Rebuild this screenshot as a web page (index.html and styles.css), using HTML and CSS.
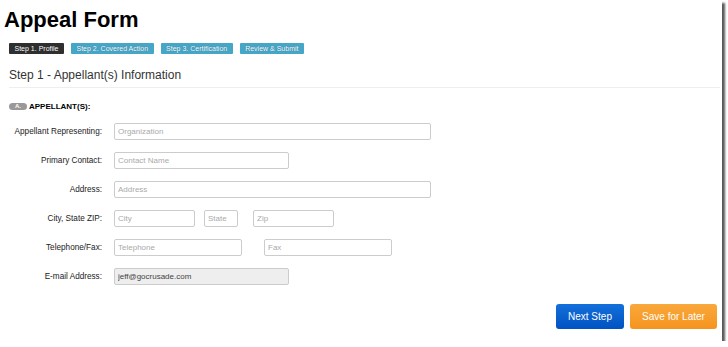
FILE: index.html
```html
<!DOCTYPE html>
<html>
<head>
  <title>Appeal Form</title>
  <link rel="stylesheet" href="styles.css">
</head>
<body>
  <div class="frame">
    <h1>Appeal Form</h1>

    <div class="steps">
      <span class="step active">Step 1. Profile</span>
      <span class="step">Step 2. Covered Action</span>
      <span class="step">Step 3. Certification</span>
      <span class="step">Review &amp; Submit</span>
    </div>

    <h2 class="section-title">Step 1 - Appellant(s) Information</h2>

    <div class="subhead">
      <span class="badge">A.</span>
      <span>APPELLANT(S):</span>
    </div>

    <form id="appealForm">
      <div class="row">
        <label for="org">Appellant Representing:</label>
        <input type="text" id="org" class="w-lg" placeholder="Organization">
      </div>

      <div class="row">
        <label for="contact">Primary Contact:</label>
        <input type="text" id="contact" class="w-md" placeholder="Contact Name">
      </div>

      <div class="row">
        <label for="address">Address:</label>
        <input type="text" id="address" class="w-lg" placeholder="Address">
      </div>

      <div class="row">
        <label for="city">City, State ZIP:</label>
        <input type="text" id="city" class="w-city" placeholder="City">
        <input type="text" id="state" class="w-state" placeholder="State">
        <input type="text" id="zip" class="w-city" placeholder="Zip">
      </div>

      <div class="row">
        <label for="phone">Telephone/Fax:</label>
        <input type="tel" id="phone" class="w-tel" placeholder="Telephone">
        <input type="tel" id="fax" class="w-tel fax" placeholder="Fax">
      </div>

      <div class="row">
        <label for="email">E-mail Address:</label>
        <input type="email" id="email" class="w-md" value="jeff@gocrusade.com" readonly>
      </div>

      <div class="buttons">
        <button type="submit" class="btn btn-next">Next Step</button>
        <button type="button" class="btn btn-save">Save for Later</button>
      </div>
    </form>
  </div>
</body>
</html>
```

FILE: styles.css
```css
body {
  font-family: "Liberation Sans", Arial, sans-serif;
  margin: 0;
  background: #fff;
  color: #333;
}

.frame {
  width: 722px;
  height: 341px;
  box-sizing: border-box;
  padding-top: 7px;
  background: #fff;
  box-shadow: 3px 3px 2px rgba(0, 0, 0, 0.65);
}

h1 {
  margin: 0 0 0 4px;
  font-size: 22px;
  line-height: 25px;
  color: #000;
}

.steps {
  display: flex;
  gap: 7px;
  margin: 11px 0 0 9px;
}

.step {
  font-size: 7px;
  line-height: 11px;
  padding: 0 5.5px;
  color: #fff;
  background-color: #45a6c8;
  border-radius: 1px;
  text-shadow: 0 0 1px rgba(0, 0, 0, 0.4);
}

.step.active {
  background-color: #2f2f2f;
}

.section-title {
  margin: 14px 2px 0 9px;
  padding-bottom: 5px;
  font-size: 12px;
  line-height: 14px;
  font-weight: normal;
  color: #333;
  border-bottom: 1px solid #eee;
}

.subhead {
  display: flex;
  align-items: center;
  gap: 2px;
  margin: 14px 0 0 9px;
  font-size: 8px;
  font-weight: bold;
  color: #000;
}

.badge {
  width: 18px;
  height: 7px;
  line-height: 7px;
  font-size: 6px;
  text-align: center;
  color: #fff;
  background-color: #999;
  border-radius: 4px;
}

form {
  margin-top: 12px;
}

.row {
  display: flex;
  align-items: center;
  height: 17px;
  margin-bottom: 12px;
}

label {
  width: 102px;
  margin-right: 12px;
  text-align: right;
  font-size: 8.2px;
  color: #222;
}

input {
  box-sizing: border-box;
  height: 17px;
  margin: 0 9px 0 0;
  padding: 0 3px;
  border: 1px solid #ccc;
  border-radius: 2px;
  font-family: inherit;
  font-size: 8px;
  color: #444;
  background: #fff;
}

input::placeholder {
  color: #aaa;
}

input[readonly] {
  background-color: #eee;
}

.w-lg { width: 317px; }
.w-md { width: 175px; }
.w-city { width: 81px; }
.w-state { width: 34px; margin-right: 15px; }
.w-tel { width: 128px; }
.fax { margin-left: 13px; }

.buttons {
  display: flex;
  justify-content: flex-end;
  gap: 6px;
  margin: 19px 5px 0 0;
}

.btn {
  height: 25px;
  padding: 0;
  border: none;
  border-radius: 3px;
  font-family: inherit;
  font-size: 10px;
  color: #fff;
  cursor: pointer;
}

.btn-next {
  width: 68px;
  background: linear-gradient(#1370da, #0052c2);
}

.btn-save {
  width: 87px;
  background: linear-gradient(#f9a83c, #f5941e);
}
```
